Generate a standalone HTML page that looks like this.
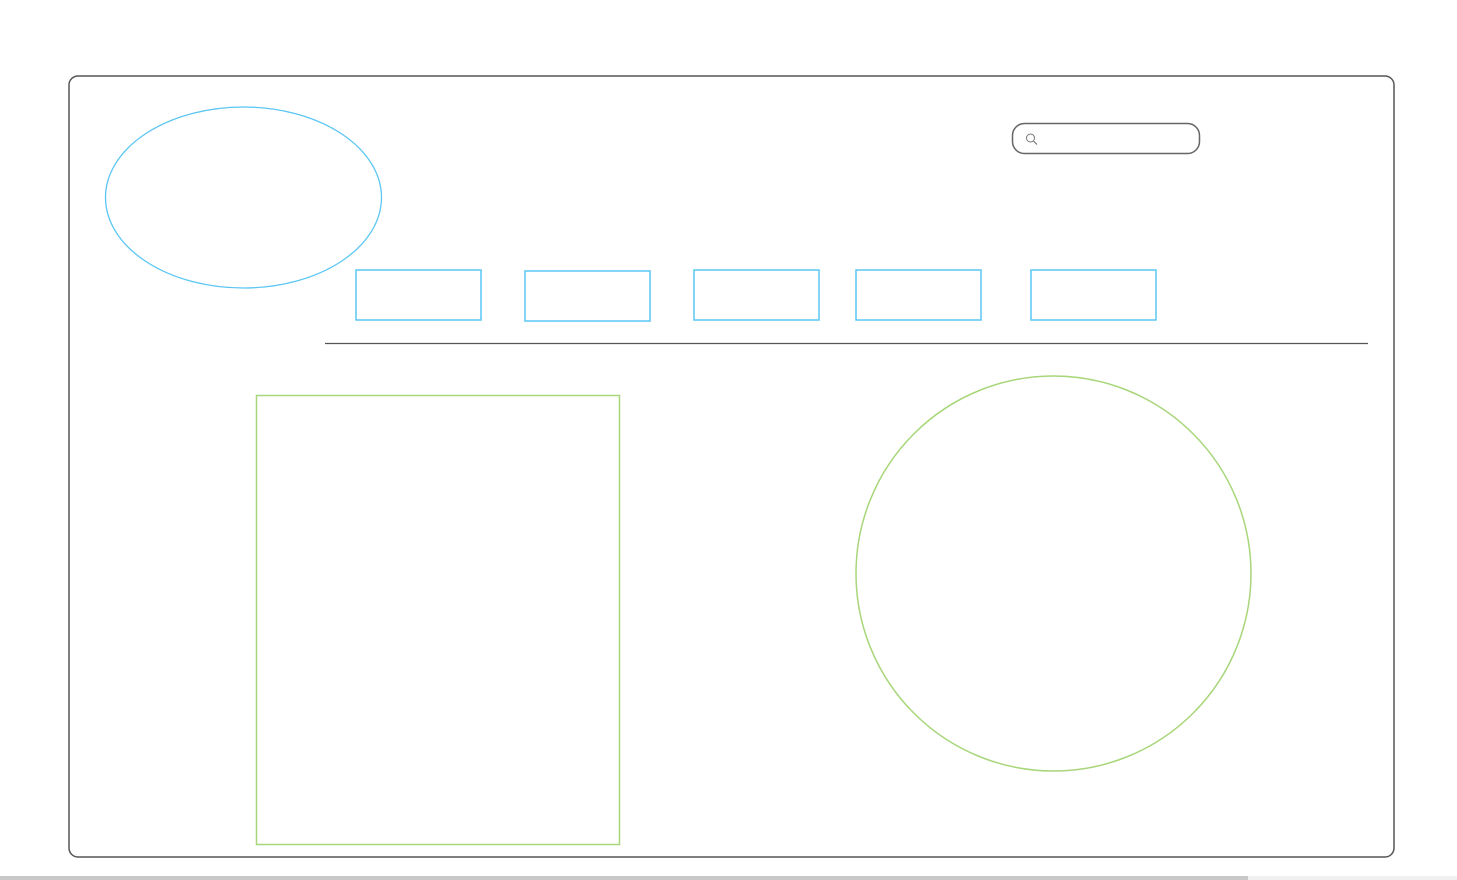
<!DOCTYPE html>
<html><head><style>html,body{margin:0;padding:0;width:1457px;height:880px;overflow:hidden;background:#fff}</style></head>
<body>
<svg width="1457" height="880" xmlns="http://www.w3.org/2000/svg" style="position:absolute;left:0;top:0">
<rect x="69" y="76" width="1325" height="781" rx="9" fill="none" stroke="#555" stroke-width="1.5"/>
<ellipse cx="243.5" cy="197.5" rx="138" ry="90.5" fill="none" stroke="#5bc6f3" stroke-width="1.3"/>
<rect x="1012.5" y="123.5" width="187" height="30" rx="12" fill="none" stroke="#666" stroke-width="1.5"/>
<circle cx="1030.5" cy="138" r="4" fill="none" stroke="#777" stroke-width="1"/>
<line x1="1033.5" y1="141" x2="1037" y2="144.5" stroke="#777" stroke-width="1.2"/>
<g fill="none" stroke="#5bc6f3" stroke-width="1.5">
<rect x="356" y="270" width="125" height="50"/>
<rect x="525" y="271" width="125" height="50"/>
<rect x="694" y="270" width="125" height="50"/>
<rect x="856" y="270" width="125" height="50"/>
<rect x="1031" y="270" width="125" height="50"/>
</g>
<line x1="325" y1="343.5" x2="1368" y2="343.5" stroke="#555" stroke-width="1.3"/>
<rect x="256.5" y="395.5" width="363" height="449" fill="none" stroke="#a8d67a" stroke-width="1.5"/>
<circle cx="1053.5" cy="573.5" r="197.5" fill="none" stroke="#a8d67a" stroke-width="1.5"/>
<rect x="0" y="876" width="1457" height="4" fill="#f0f0f0"/>
<rect x="0" y="876" width="1248" height="4" fill="#c8c8c8"/>
</svg>
</body></html>
